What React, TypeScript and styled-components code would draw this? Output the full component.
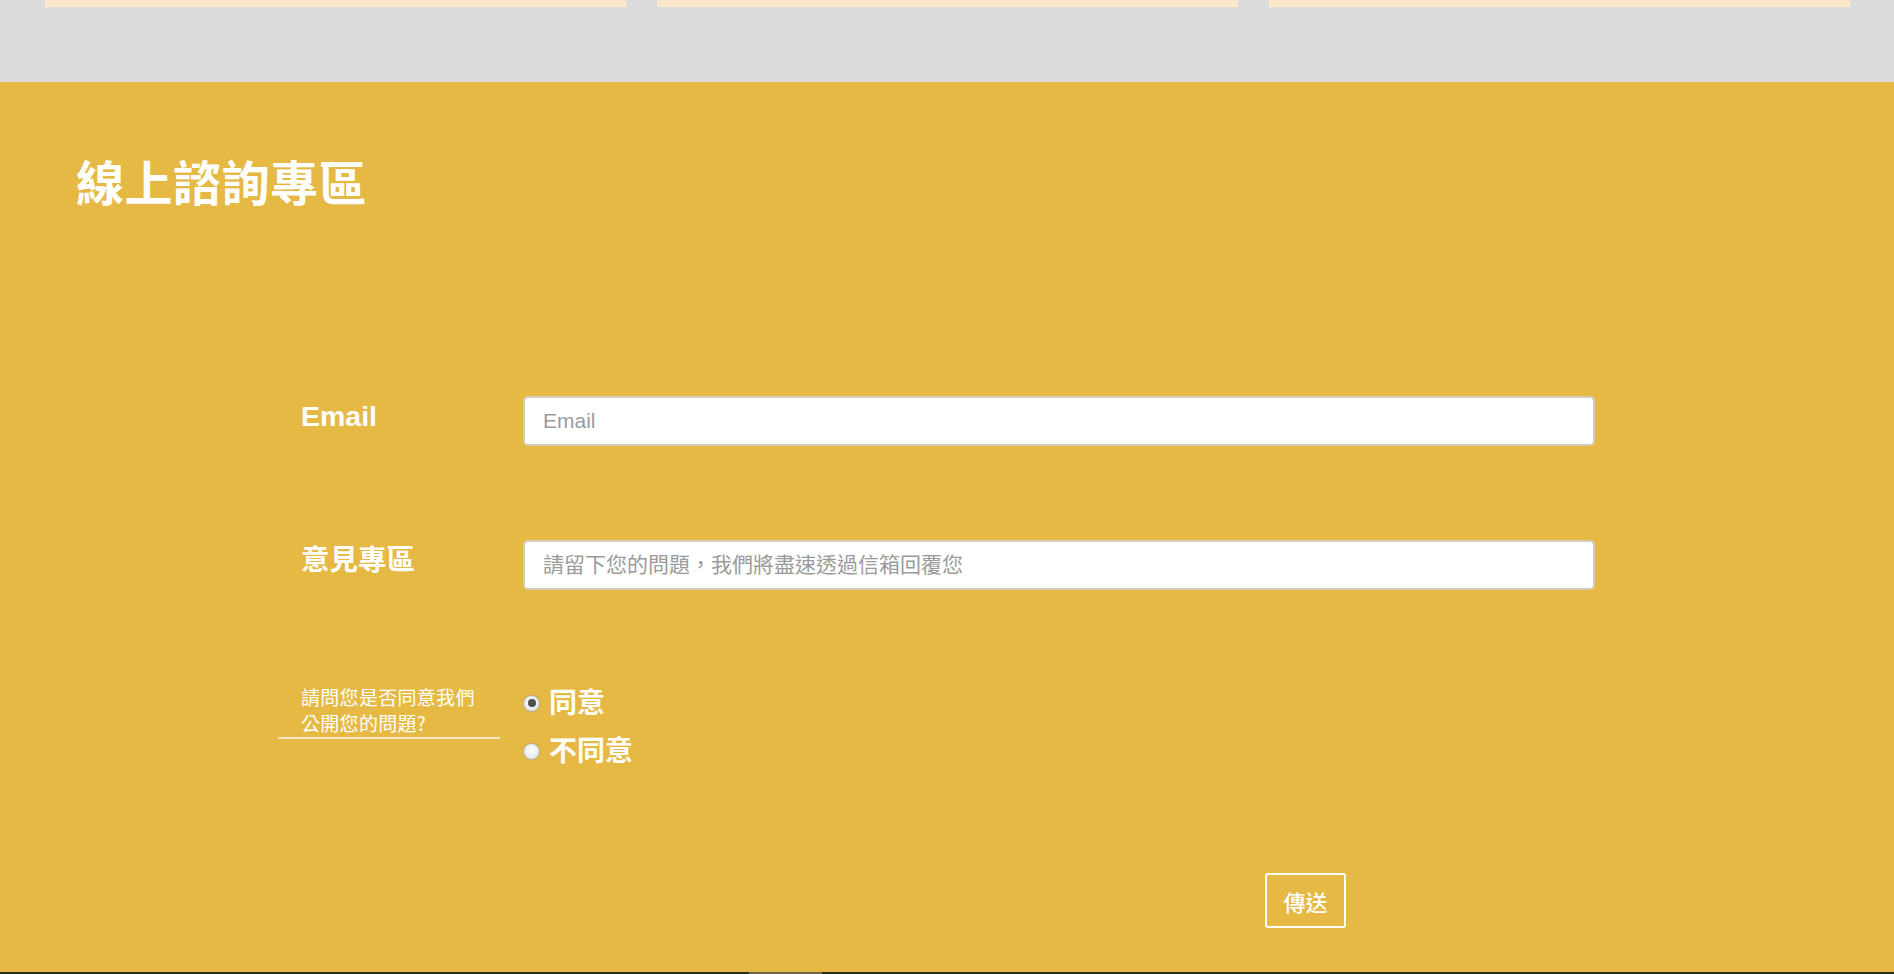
import React, { useState } from "react";
import styled, { createGlobalStyle } from "styled-components";

const GlobalStyle = createGlobalStyle`
  html, body { margin: 0; padding: 0; }
  body {
    background: #dcdcdc;
    font-family: "Liberation Sans", Arial, "Noto Sans CJK TC", sans-serif;
    overflow: hidden;
  }
  * { box-sizing: border-box; }
`;

const Page = styled.div`
  width: 1894px;
  height: 974px;
  display: flex;
  flex-direction: column;
`;

const CardStrip = styled.div`
  height: 82px;
  background: #dcdcdc;
  display: grid;
  grid-template-columns: repeat(3, 581px);
  column-gap: 31px;
  padding: 0 45px;
  align-items: start;
`;

const CardBottom = styled.div`
  height: 7px;
  background: #fde8cb;
`;

const Section = styled.section`
  flex: 1;
  background: #e6b944;
  padding: 69px 0 0 0;
  display: flex;
  flex-direction: column;
`;

const Title = styled.h2`
  margin: 0 0 0 76px;
  font-family: "Noto Sans CJK TC", sans-serif;
  font-weight: 700;
  font-size: 48px;
  line-height: 58px;
  color: #ffffff;
  letter-spacing: 0.5px;
`;

const Form = styled.form`
  margin: 187px 0 0 278px;
  width: 1317px;
  display: flex;
  flex-direction: column;
  gap: 94px;
`;

const Row = styled.div`
  display: grid;
  grid-template-columns: 222px 1072px;
  column-gap: 23px;
  align-items: start;
`;

const Label = styled.label`
  padding-left: 23px;
  font-family: "Liberation Sans", Arial, "Noto Sans CJK TC", sans-serif;
  font-weight: 700;
  font-size: 28.5px;
  line-height: 40px;
  color: #ffffff;
`;

const Question = styled.div`
  padding: 0 0 1px 23px;
  border-bottom: 2px solid #f6e7c4;
  font-family: "Noto Sans CJK TC", sans-serif;
  font-size: 19px;
  line-height: 26px;
  color: #ffffff;
  letter-spacing: 0.3px;
`;

const Input = styled.input`
  width: 100%;
  height: 50px;
  border: 2px solid #d4cdbd;
  border-radius: 5px;
  background: #ffffff;
  padding: 0 18px;
  font-family: "Liberation Sans", Arial, "Noto Sans CJK TC", sans-serif;
  font-size: 21px;
  color: #555;
  outline: none;
  &::placeholder {
    color: #9b9b9b;
  }
`;

const Options = styled.div`
  display: flex;
  flex-direction: column;
  gap: 8px;
  margin-top: -1px;
`;

const Option = styled.label`
  display: flex;
  align-items: center;
  gap: 9px;
  height: 40px;
  font-family: "Noto Sans CJK TC", sans-serif;
  font-weight: 700;
  font-size: 28px;
  line-height: 40px;
  color: #ffffff;
  cursor: pointer;
`;

const OptionText = styled.span`
  position: relative;
  top: -2px;
`;

const Radio = styled.input`
  appearance: none;
  margin: 0;
  width: 17px;
  height: 17px;
  border-radius: 50%;
  border: 1px solid #b9b2a2;
  background: radial-gradient(circle at 50% 40%, #ffffff 0%, #e6e6e6 70%, #d4d4d4 100%);
  box-shadow: 0 0 1px rgba(0, 0, 0, 0.2);
  position: relative;
  flex: none;
  &:checked::after {
    content: "";
    position: absolute;
    left: 3.5px;
    top: 3.5px;
    width: 8px;
    height: 8px;
    border-radius: 50%;
    background: #505050;
  }
`;

const SubmitRow = styled.div`
  margin: 102px 0 0 1265px;
`;

const Submit = styled.button`
  width: 81px;
  height: 55px;
  border: 2px solid #ffffff;
  border-radius: 3px;
  background: transparent;
  color: #ffffff;
  font-family: "Noto Sans CJK TC", sans-serif;
  font-weight: 500;
  font-size: 22px;
  padding: 0;
  cursor: pointer;
`;

const BottomBar = styled.div`
  height: 2px;
  background: #2e2a20;
  display: flex;
  padding-left: 749px;
`;

const BarThumb = styled.div`
  width: 73px;
  height: 2px;
  background: #6b6350;
`;

export default function App() {
  const [agree, setAgree] = useState("yes");
  return (
    <>
      <GlobalStyle />
      <Page>
        <CardStrip>
          <CardBottom />
          <CardBottom />
          <CardBottom />
        </CardStrip>
        <Section>
          <Title>線上諮詢專區</Title>
          <Form onSubmit={(e) => e.preventDefault()}>
            <Row>
              <Label htmlFor="email">Email</Label>
              <Input id="email" type="email" placeholder="Email" />
            </Row>
            <Row>
              <Label htmlFor="msg">意見專區</Label>
              <Input id="msg" type="text" placeholder="請留下您的問題，我們將盡速透過信箱回覆您" />
            </Row>
            <Row>
              <Question>
                請問您是否同意我們
                <br />
                公開您的問題?
              </Question>
              <Options>
                <Option>
                  <Radio
                    type="radio"
                    name="agree"
                    checked={agree === "yes"}
                    onChange={() => setAgree("yes")}
                  />
                  <OptionText>同意</OptionText>
                </Option>
                <Option>
                  <Radio
                    type="radio"
                    name="agree"
                    checked={agree === "no"}
                    onChange={() => setAgree("no")}
                  />
                  <OptionText>不同意</OptionText>
                </Option>
              </Options>
            </Row>
          </Form>
          <SubmitRow>
            <Submit type="submit">傳送</Submit>
          </SubmitRow>
        </Section>
        <BottomBar>
          <BarThumb />
        </BottomBar>
      </Page>
    </>
  );
}
